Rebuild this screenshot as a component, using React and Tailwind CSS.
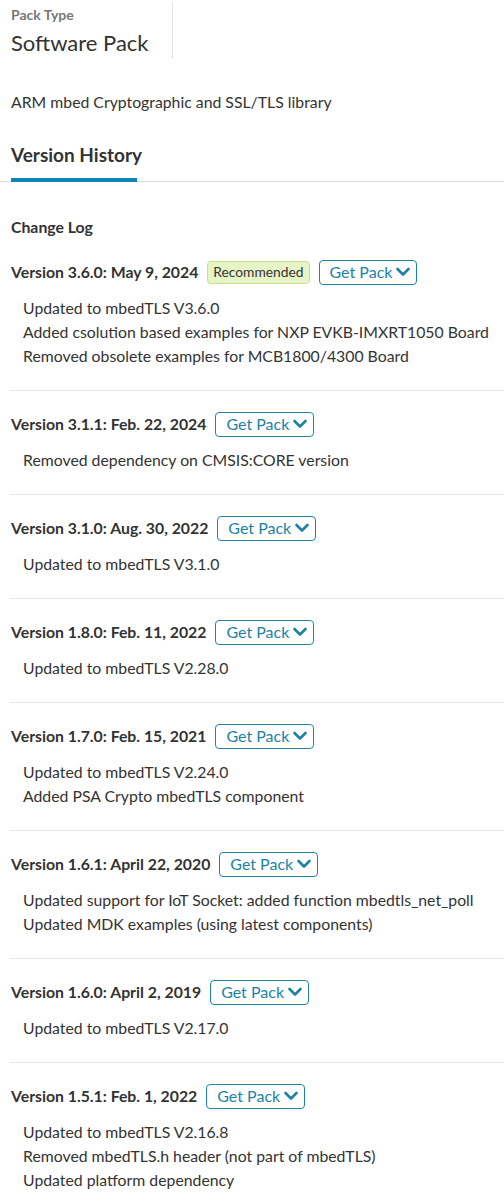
import React from "react";

const versions = [
  { v: "3.6.0", d: "May 9, 2024", rec: true, items: ["Updated to mbedTLS V3.6.0", "Added csolution based examples for NXP EVKB-IMXRT1050 Board", "Removed obsolete examples for MCB1800/4300 Board"] },
  { v: "3.1.1", d: "Feb. 22, 2024", items: ["Removed dependency on CMSIS:CORE version"] },
  { v: "3.1.0", d: "Aug. 30, 2022", items: ["Updated to mbedTLS V3.1.0"] },
  { v: "1.8.0", d: "Feb. 11, 2022", items: ["Updated to mbedTLS V2.28.0"] },
  { v: "1.7.0", d: "Feb. 15, 2021", items: ["Updated to mbedTLS V2.24.0", "Added PSA Crypto mbedTLS component"] },
  { v: "1.6.1", d: "April 22, 2020", items: ["Updated support for IoT Socket: added function mbedtls_net_poll", "Updated MDK examples (using latest components)"] },
  { v: "1.6.0", d: "April 2, 2019", items: ["Updated to mbedTLS V2.17.0"] },
  { v: "1.5.1", d: "Feb. 1, 2022", items: ["Updated to mbedTLS V2.16.8", "Removed mbedTLS.h header (not part of mbedTLS)", "Updated platform dependency"] },
];

function Chevron() {
  return (
    <svg width="16" height="16" viewBox="0 0 16 16" className="ml-[3px]">
      <path d="M2.5 5 L8 10.5 L13.5 5" fill="none" stroke="#1b83a6" strokeWidth="2.6" strokeLinecap="round" strokeLinejoin="round" />
    </svg>
  );
}

export default function App() {
  return (
    <div className="w-[504px] bg-white text-[#333]" style={{ fontFamily: "Lato, 'Noto Sans', sans-serif" }}>
      <div className="flex pl-[11px] pt-[3px]">
        <div className="w-[162px] border-r border-[#e3e3e3] h-[56px]">
          <div className="text-[14px] font-bold text-[#777] leading-[16px] mt-[4px]">Pack Type</div>
          <div className="text-[22px] leading-[28px] text-[#333] mt-[6px] whitespace-nowrap">Software Pack</div>
        </div>
      </div>
      <div className="pl-[11px] mt-[33px] text-[15.8px] leading-[20px] whitespace-nowrap">ARM mbed Cryptographic and SSL/TLS library</div>
      <div className="mt-[31px] flex items-end border-b border-[#dcdcdc]">
        <div className="ml-[11px] w-[126px] border-b-[4px] border-[#0a87b5] text-[19px] font-bold leading-[24px] pb-[11px] text-[#333] whitespace-nowrap" style={{ marginBottom: "-1px" }}>Version History</div>
      </div>
      <div className="pl-[11px] mt-[35px] text-[15.8px] font-bold leading-[20px]">Change Log</div>
      <div className="mt-[23px]">
        {versions.map((ver, i) => (
          <div key={ver.v} className={`ml-[10px] ${i > 0 ? "border-t border-[#e6e6e6] pt-[21px]" : ""} ${i < versions.length - 1 ? "pb-[22px]" : "pb-[10px]"}`}>
            <div className="flex items-center h-[24px] pl-[1px]">
              <span className="text-[15.8px] font-bold text-[#333] whitespace-nowrap">Version {ver.v}: {ver.d}</span>
              {ver.rec && (
                <span className="ml-[9px] h-[23px] px-[5px] flex items-center text-[13.8px] text-[#333] bg-[#e6f4c6] border border-[#c8e08e] rounded-[4px] whitespace-nowrap">Recommended</span>
              )}
              <span className="ml-[9px] h-[25px] pl-[10px] pr-[5px] flex items-center border border-[#1f86a8] rounded-[4px] text-[16px] text-[#1b83a6] whitespace-nowrap">
                Get Pack
                <Chevron />
              </span>
            </div>
            <div className="mt-[12px] pl-[13px] text-[15.8px] leading-[24px] text-[#333]">
              {ver.items.map((it) => (
                <div key={it} className="whitespace-nowrap">{it}</div>
              ))}
            </div>
          </div>
        ))}
      </div>
    </div>
  );
}
